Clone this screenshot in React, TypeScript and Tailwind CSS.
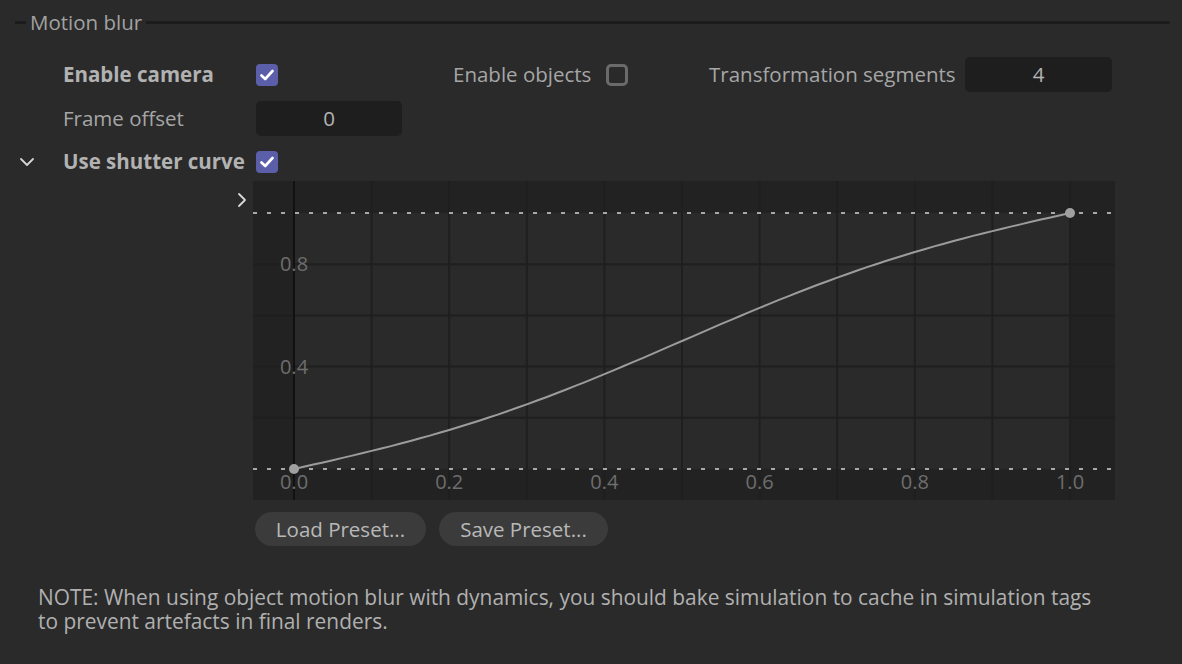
import React from "react";

/* Chart geometry (relative to the graph box) */
const W = 862;
const H = 319;
const X0 = 41;
const X1 = 817;
const Y0 = 288;
const Y1 = 32;

const px = (u: number) => X0 + u * (X1 - X0);
const py = (v: number) => Y0 - v * (Y0 - Y1);

// shutter curve: gentle S around the diagonal
function curvePath() {
    const pts: string[] = [];
    for (let i = 0; i <= 80; i++) {
        const u = i / 80;
        const v = u - 0.05 * Math.sin(2 * Math.PI * u);
        pts.push(`${i === 0 ? "M" : "L"}${px(u).toFixed(1)} ${py(v).toFixed(1)}`);
    }
    return pts.join(" ");
}

function Check({ checked }: { checked: boolean }) {
    if (!checked) {
        return <div className="w-[22px] h-[22px] rounded-[5px] border-[3px] border-[#6a6a6a]" />;
    }
    return (
        <div className="w-[22px] h-[22px] rounded-[4px] bg-[#5b5ea8] flex items-center justify-center">
            <svg width="14" height="12" viewBox="0 0 14 12" fill="none">
                <path d="M1.5 6.5 L5.2 10 L12.5 2" stroke="#ffffff" strokeWidth="2.6" strokeLinecap="round" strokeLinejoin="round" />
            </svg>
        </div>
    );
}

function NumberField({ value, width }: { value: string; width: string }) {
    return (
        <div className={`${width} h-[35px] rounded-[5px] bg-[#1e1e1e] flex items-center justify-center text-[#b4b4b4]`}>
            {value}
        </div>
    );
}

function ShutterGraph() {
    const vx = Array.from({ length: 11 }, (_, i) => px(i / 10));
    const hy = [0.2, 0.4, 0.6, 0.8].map(py);
    return (
        <svg width={W} height={H} className="block">
            <rect x="0" y="0" width={W} height={H} fill="#222222" />
            <rect x={X0} y={Y1} width={X1 - X0} height={Y0 - Y1} fill="#2a2a2a" />
            {vx.map((x) => (
                <line key={x} x1={x} y1="0" x2={x} y2={H} stroke="#1f1f1f" strokeWidth="2" />
            ))}
            {hy.map((y) => (
                <line key={y} x1="0" y1={y} x2={W} y2={y} stroke="#1f1f1f" strokeWidth="2" />
            ))}
            <line x1={X0} y1="0" x2={X0} y2={H} stroke="#111111" strokeWidth="2" />

            {/* axis labels */}
            <g fill="#6e6e6e" fontSize="20" fontFamily="'Open Sans', sans-serif" textAnchor="middle">
                <text x={X0} y={py(0.8) + 7}>0.8</text>
                <text x={X0} y={py(0.4) + 7}>0.4</text>
                {[0, 0.2, 0.4, 0.6, 0.8, 1].map((u) => (
                    <text key={u} x={px(u)} y="308">{u.toFixed(1)}</text>
                ))}
            </g>

            {/* range limits */}
            <line x1="0" y1={Y1} x2={W} y2={Y1} stroke="#a8a8a8" strokeWidth="2" strokeDasharray="4 10" />
            <line x1="0" y1={Y0} x2={W} y2={Y0} stroke="#a8a8a8" strokeWidth="2" strokeDasharray="4 10" />

            <path d={curvePath()} stroke="#9c9c9c" strokeWidth="2" fill="none" />
            <circle cx={X0} cy={Y0} r="5" fill="#a0a0a0" />
            <circle cx={X1} cy={Y1} r="5" fill="#a0a0a0" />
        </svg>
    );
}

export default function App() {
    return (
        <div className="w-[1182px] h-[664px] overflow-hidden bg-[#2a2a2a] text-[20.5px] text-[#a6a6a6] font-['Open_Sans',sans-serif] flex flex-col">

            {/* Group header */}
            <div className="h-[45px] flex items-center">
                <div className="ml-[15px] w-[11px] h-[3px] bg-[#1c1c1c]" />
                <span className="px-[4px] text-[#a2a2a2] leading-none">Motion blur</span>
                <div className="flex-1 mr-[12px] h-[3px] bg-[#1c1c1c] rounded-r-full" />
            </div>

            {/* Enable camera / objects / segments */}
            <div className="mt-[12px] h-[35px] flex items-center">
                <div className="w-[63px]" />
                <div className="w-[193px] font-bold text-[#b2b2b2] whitespace-nowrap">Enable camera</div>
                <Check checked />
                <div className="ml-[175px] w-[153px] whitespace-nowrap">Enable objects</div>
                <Check checked={false} />
                <div className="ml-[81px] w-[256px] whitespace-nowrap">Transformation segments</div>
                <NumberField value="4" width="w-[147px]" />
            </div>

            {/* Frame offset */}
            <div className="mt-[9px] h-[35px] flex items-center">
                <div className="w-[63px]" />
                <div className="w-[193px] whitespace-nowrap">Frame offset</div>
                <NumberField value="0" width="w-[146px]" />
            </div>

            {/* Use shutter curve */}
            <div className="mt-[8px] h-[35px] flex items-center">
                <div className="w-[63px] pl-[19px]">
                    <svg width="16" height="10" viewBox="0 0 16 10" fill="none">
                        <path d="M2 2 L8 8 L14 2" stroke="#d4d4d4" strokeWidth="1.8" strokeLinecap="round" strokeLinejoin="round" />
                    </svg>
                </div>
                <div className="w-[193px] font-bold text-[#b2b2b2] whitespace-nowrap">Use shutter curve</div>
                <Check checked />
            </div>

            {/* Curve editor */}
            <div className="mt-[2px] flex">
                <div className="w-[253px] flex justify-end pr-[6px] pt-[11px]">
                    <svg width="10" height="16" viewBox="0 0 10 16" fill="none">
                        <path d="M2 2 L8 8 L2 14" stroke="#d8d8d8" strokeWidth="1.8" strokeLinecap="round" strokeLinejoin="round" />
                    </svg>
                </div>
                <ShutterGraph />
            </div>

            {/* Presets */}
            <div className="mt-[12px] flex gap-[13px] pl-[255px]">
                <button className="w-[171px] h-[34px] rounded-full bg-[#3b3b3b] text-[#b8b8b8]">Load Preset...</button>
                <button className="w-[169px] h-[34px] rounded-full bg-[#3b3b3b] text-[#b8b8b8]">Save Preset...</button>
            </div>

            {/* Note */}
            <div className="mt-[39px] pl-[38px] text-[20.9px] text-[#b0b0b0] whitespace-nowrap">
                <div className="h-[24px] leading-[24px]">
                    NOTE: When using object motion blur with dynamics, you should bake simulation to cache in simulation tags
                </div>
                <div className="h-[24px] leading-[24px]">to prevent artefacts in final renders.</div>
            </div>
        </div>
    );
}
